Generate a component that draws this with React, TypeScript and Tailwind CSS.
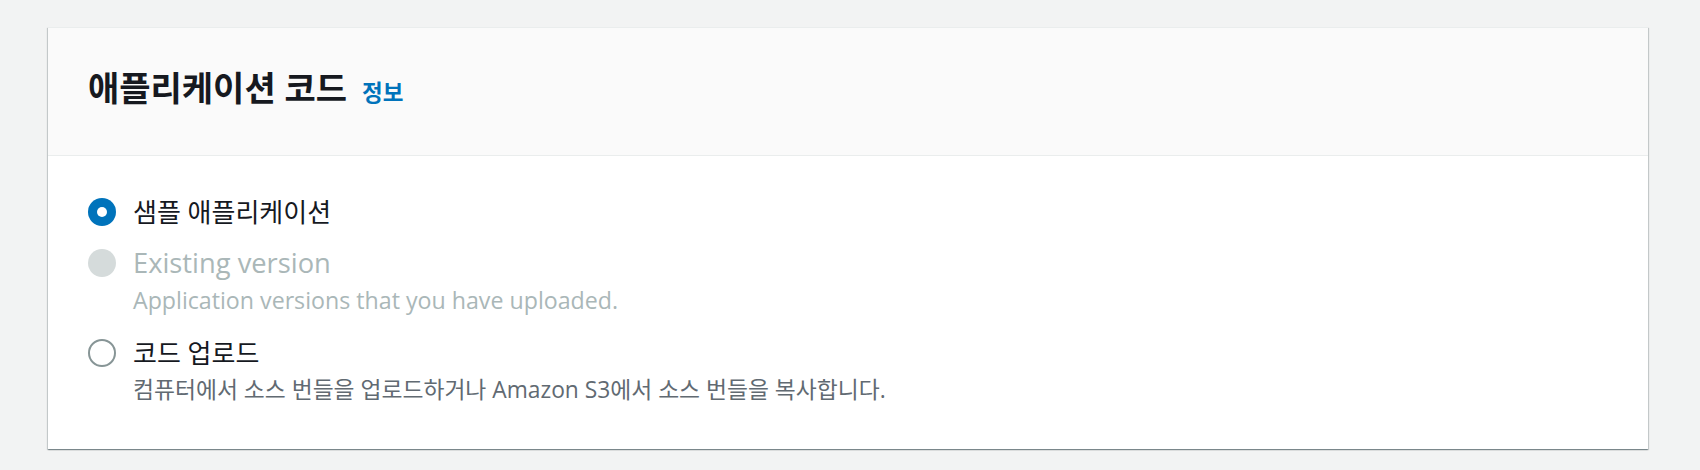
import React from 'react';

type RadioState = 'checked' | 'disabled' | 'unchecked';

const font = "font-['Open_Sans','Noto_Sans_CJK_KR',sans-serif]";

function RadioDot({ state }: { state: RadioState }) {
    if (state === 'checked') {
        return (
            <span className="w-[28px] h-[28px] rounded-full bg-[#0073bb] flex items-center justify-center">
                <span className="w-[10px] h-[10px] rounded-full bg-white" />
            </span>
        );
    }
    if (state === 'disabled') {
        return <span className="w-[28px] h-[28px] rounded-full bg-[#d5dbdb]" />;
    }
    return <span className="w-[28px] h-[28px] rounded-full bg-white border-2 border-[#879596]" />;
}

function RadioRow({
    state,
    label,
    labelClass,
    description,
    descClass,
    className = '',
}: {
    state: RadioState;
    label: string;
    labelClass: string;
    description?: string;
    descClass?: string;
    className?: string;
}) {
    const muted = state === 'disabled';
    return (
        <label className={`flex items-start ${className}`}>
            <div className="h-[38px] flex items-center shrink-0">
                <RadioDot state={state} />
            </div>
            <div className="ml-[17px] flex flex-col">
                <span className={`leading-[38px] ${labelClass} ${muted ? 'text-[#aab7b8]' : 'text-[#16191f]'}`}>
                    {label}
                </span>
                {description && (
                    <span className={`leading-[34px] mt-[1px] ${descClass} ${muted ? 'text-[#aab7b8]' : 'text-[#616a72]'}`}>
                        {description}
                    </span>
                )}
            </div>
        </label>
    );
}

export default function App() {
    return (
        <div className={`min-h-screen bg-[#f2f3f3] pt-[27px] pl-[48px] pr-[52px] ${font}`}>
            <div className="bg-white border-t border-[#eaeded] shadow-[0_1px_1px_0_rgba(0,28,36,0.3),1px_1px_1px_0_rgba(0,28,36,0.15),-1px_1px_1px_0_rgba(0,28,36,0.15)]">
                {/* Header */}
                <div className="h-[128px] bg-[#fafafa] border-b border-[#eaeded] px-[40px] pb-[6px] flex items-center">
                    <div className="flex items-baseline">
                        <h2 className="text-[34px] font-bold text-[#16191f] leading-[40px]">
                            애플리케이션 코드
                        </h2>
                        <a href="#" className="ml-[15px] text-[22.5px] font-bold text-[#0073bb]">
                            정보
                        </a>
                    </div>
                </div>

                {/* Body */}
                <div className="px-[40px] pt-[37px] pb-[42px] flex flex-col">
                    <RadioRow
                        state="checked"
                        label="샘플 애플리케이션"
                        labelClass="text-[26px]"
                    />
                    <RadioRow
                        className="mt-[13px]"
                        state="disabled"
                        label="Existing version"
                        labelClass="text-[27.3px]"
                        description="Application versions that you have uploaded."
                        descClass="text-[23.2px]"
                    />
                    <RadioRow
                        className="mt-[17px]"
                        state="unchecked"
                        label="코드 업로드"
                        labelClass="text-[26px]"
                        description="컴퓨터에서 소스 번들을 업로드하거나 Amazon S3에서 소스 번들을 복사합니다."
                        descClass="text-[22.8px]"
                    />
                </div>
            </div>
        </div>
    );
}
